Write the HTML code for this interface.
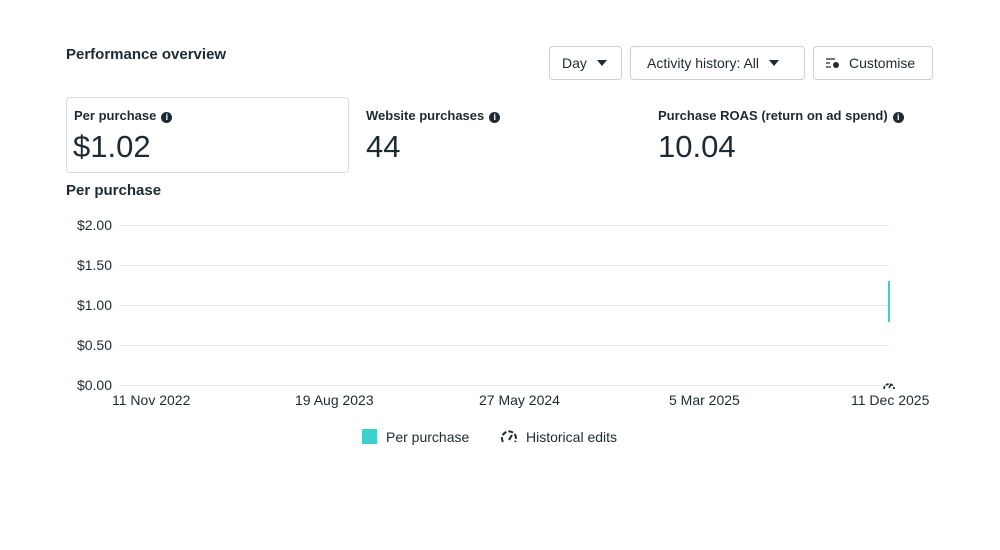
<!DOCTYPE html>
<html><head><style>
body{margin:0;width:1000px;height:550px;background:#fff;font-family:"Liberation Sans",sans-serif;color:#1c2b33;position:relative;overflow:hidden}
.a{position:absolute}
.btn{position:absolute;top:46px;height:34px;border:1px solid #ccd0d5;border-radius:4px;box-sizing:border-box;font-size:14px;line-height:32px;color:#1c2b33}
.tri{display:inline-block;width:0;height:0;border-left:5px solid transparent;border-right:5px solid transparent;border-top:6px solid #1c2b33;vertical-align:middle;margin-left:10px;margin-top:-2px}
.lbl{font-size:13px;font-weight:bold}
.big{font-size:31px;color:#1c2b33}
.i{display:inline-block;width:11px;height:11px;border-radius:50%;background:#1c2b33;color:#fff;font-size:9px;line-height:11px;text-align:center;font-weight:bold;vertical-align:0px;margin-left:5px}
.y{position:absolute;left:60px;width:52px;text-align:right;font-size:14px}
.g{position:absolute;left:119px;width:770px;height:1px;background:#e4e6eb}
.x{position:absolute;top:392px;font-size:14px;white-space:nowrap}
</style></head><body>
<div class="a" style="left:66px;top:46px;font-size:15px;font-weight:bold">Performance overview</div>
<div class="btn" style="left:549px;width:73px;padding-left:12px">Day<span class="tri"></span></div>
<div class="btn" style="left:630px;width:175px;padding-left:16px">Activity history: All<span class="tri"></span></div>
<div class="btn" style="left:813px;width:120px;padding-left:11px"><svg width="16" height="12" style="vertical-align:-1px;margin-right:8px"><path d="M1 2h9M1 6h4M1 10h5" stroke="#1c2b33" stroke-width="1.3"/><circle cx="11" cy="8" r="3" fill="#1c2b33"/></svg>Customise</div>
<div class="a" style="left:66px;top:97px;width:283px;height:76px;border:1px solid #dadde1;border-radius:4px;box-sizing:border-box"></div>
<div class="a lbl" style="left:74px;top:108px">Per purchase<span class="i">i</span></div>
<div class="a big" style="left:73px;top:129px">$1.02</div>
<div class="a lbl" style="left:366px;top:108px">Website purchases<span class="i">i</span></div>
<div class="a big" style="left:366px;top:129px">44</div>
<div class="a lbl" style="left:658px;top:108px">Purchase ROAS (return on ad spend)<span class="i">i</span></div>
<div class="a big" style="left:658px;top:129px">10.04</div>
<div class="a" style="left:66px;top:182px;font-size:15px;font-weight:bold">Per purchase</div>
<div class="y" style="top:217px">$2.00</div><div class="g" style="top:225px"></div>
<div class="y" style="top:257px">$1.50</div><div class="g" style="top:265px"></div>
<div class="y" style="top:297px">$1.00</div><div class="g" style="top:305px"></div>
<div class="y" style="top:337px">$0.50</div><div class="g" style="top:345px"></div>
<div class="y" style="top:377px">$0.00</div><div class="g" style="top:385px;background:#e4e6eb"></div>
<div class="a" style="left:888px;top:281px;width:2px;height:41px;background:#3dd0cc"></div>
<svg class="a" style="left:882px;top:379px" width="14" height="12"><path d="M2 10A5 5 0 1 1 12 10" fill="none" stroke="#1c2b33" stroke-width="1.8" stroke-dasharray="3 1.5"/><path d="M7 9l2-4" stroke="#1c2b33" stroke-width="1.6"/></svg>
<div class="x" style="left:112px">11 Nov 2022</div>
<div class="x" style="left:295px">19 Aug 2023</div>
<div class="x" style="left:479px">27 May 2024</div>
<div class="x" style="left:669px">5 Mar 2025</div>
<div class="x" style="left:851px">11 Dec 2025</div>
<div class="a" style="left:362px;top:429px;width:15px;height:15px;background:#3dd0cc"></div>
<div class="a" style="left:386px;top:429px;font-size:14px">Per purchase</div>
<svg class="a" style="left:500px;top:429px" width="18" height="16"><path d="M3 13A7 7 0 1 1 15 13" fill="none" stroke="#1c2b33" stroke-width="2" stroke-dasharray="5 2"/><path d="M9 11l3-5" stroke="#1c2b33" stroke-width="2"/></svg>
<div class="a" style="left:526px;top:429px;font-size:14px">Historical edits</div>
</body></html>
